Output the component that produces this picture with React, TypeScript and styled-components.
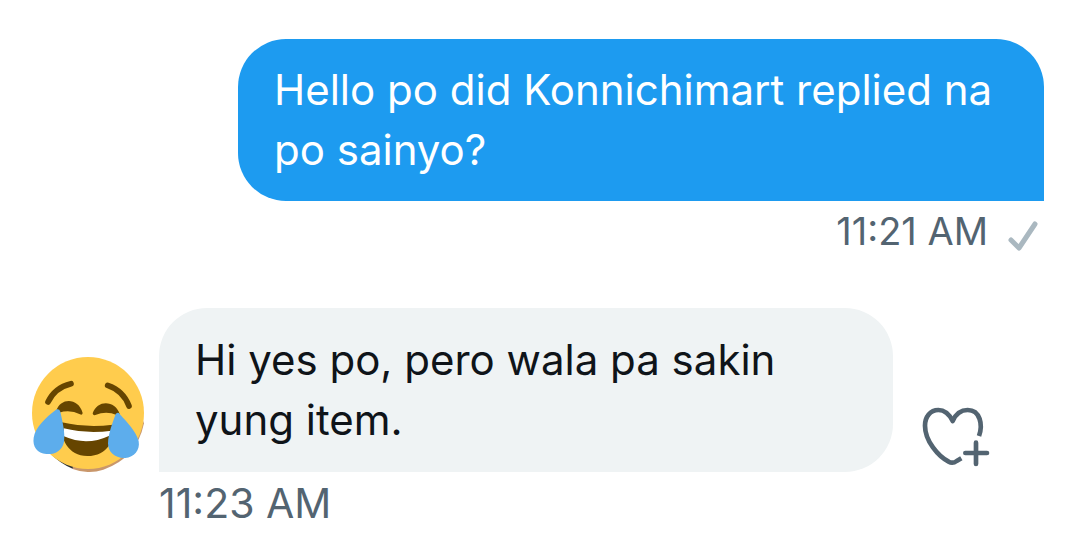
import React from "react";
import styled, { createGlobalStyle } from "styled-components";

const GlobalStyle = createGlobalStyle`
  * { box-sizing: border-box; }
  body {
    margin: 0;
    background: #ffffff;
    font-family: Inter, "Liberation Sans", sans-serif;
  }
`;

const Conversation = styled.main`
  display: flex;
  flex-direction: column;
  gap: 52px;
  padding: 39px 36px 22px 32px;
`;

const Message = styled.article<{ $sent?: boolean }>`
  display: flex;
  flex-direction: column;
  align-items: ${(p) => (p.$sent ? "flex-end" : "stretch")};
`;

const Row = styled.div`
  display: flex;
  align-items: flex-end;
`;

const Bubble = styled.p<{ $sent?: boolean }>`
  margin: 0;
  max-width: ${(p) => (p.$sent ? "806px" : "734px")};
  padding: ${(p) => (p.$sent ? "21px 36px" : "22px 36px")};
  border-radius: ${(p) => (p.$sent ? "48px 48px 0 48px" : "48px 48px 48px 0")};
  background: ${(p) => (p.$sent ? "#1d9bf0" : "#eff3f4")};
  color: ${(p) => (p.$sent ? "#ffffff" : "#0f1419")};
  font-size: 42px;
  line-height: 60px;
`;

const Meta = styled.div<{ $sent?: boolean }>`
  display: flex;
  align-items: center;
  gap: 20px;
  padding: ${(p) => (p.$sent ? "5px 6px 0 0" : "6px 0 0 127px")};
  color: #536471;
  font-size: ${(p) => (p.$sent ? "38px" : "41px")};
  line-height: 50px;
`;

const Avatar = styled.svg`
  flex: none;
  width: 112px;
  height: 115px;
  margin-right: 15px;
`;

const Check = styled.svg`
  width: 30px;
  height: 50px;
`;

const ReactButton = styled.button`
  display: flex;
  margin: 0 0 4px 28px;
  padding: 0;
  border: 0;
  background: none;
  color: #536471;
  cursor: pointer;
`;

const HeartIcon = styled.svg`
  width: 70px;
  height: 64px;
`;

function JoyAvatar() {
  return (
    <Avatar viewBox="36 36 336 345" role="img" aria-label="Face with tears of joy">
      <path d="M156 360L158 372Q202 389 250 374Q350 340 372 235L366 220Z" fill="#c9976b" />
      <path d="M90 324Q120 356 158 371L160 350Z" fill="#292f33" />
      <circle cx="204" cy="204" r="168" fill="#ffcc4d" />
      <g fill="none" stroke="#664500" strokeWidth="17" strokeLinecap="round">
        <path d="M84 171Q104 128 153 116" />
        <path d="M263 121Q310 137 327 183" />
      </g>
      <path d="M109 197C121 158 175 157 188 204Q187 211 180 208Q151 193 117 203Q109 203 109 197Z" fill="#664500" />
      <path d="M218 205C232 162 287 166 299 207Q297 214 290 210Q259 197 226 210Q218 212 218 205Z" fill="#664500" />
      <path d="M125 232Q200 249 278 239C286 283 264 333 202 333C145 333 119 281 125 232Z" fill="#664500" />
      <path d="M131 250Q200 267 275 257L268 272Q200 304 132 274Z" fill="#ffffff" />
      <path d="M113 193Q119 193 121 200C128 233 136 263 132 290C127 317 105 329 79 327C52 325 37 305 41 278C46 246 78 217 108 194Q110 192 113 193Z" fill="#5dadec" />
      <path d="M291 204Q296 202 299 207C324 235 349 260 356 289C361 316 342 337 316 339C286 341 264 322 264 295C265 264 278 234 286 210Q287 205 291 204Z" fill="#5dadec" />
    </Avatar>
  );
}

export default function App() {
  return (
    <>
      <GlobalStyle />
      <Conversation>
        <Message $sent>
          <Bubble $sent>Hello po did Konnichimart replied na po sainyo?</Bubble>
          <Meta $sent>
            <time>11:21 AM</time>
            <Check viewBox="0 0 30 50" role="img" aria-label="Sent">
              <path d="M3 34L11 42L27 18" fill="none" stroke="#aab8c0" strokeWidth="5" strokeLinecap="round" strokeLinejoin="round" />
            </Check>
          </Meta>
        </Message>
        <Message>
          <Row>
            <JoyAvatar />
            <Bubble>Hi yes po, pero wala pa sakin yung item.</Bubble>
            <ReactButton type="button" aria-label="Add reaction">
              <HeartIcon viewBox="63 42 210 192" fill="none" stroke="currentColor" strokeWidth="14">
                <path d="M237 138C249 105 241 60 203 60C181 60 166 75 158 93C149 75 136 60 115 60C91 60 75 80 75 107C75 153 115 199 146 215Q158 222 170 213L184 205" strokeLinejoin="round" />
                <path d="M228 158V222M196 189H261" strokeLinecap="round" />
              </HeartIcon>
            </ReactButton>
          </Row>
          <Meta>
            <time>11:23 AM</time>
          </Meta>
        </Message>
      </Conversation>
    </>
  );
}
